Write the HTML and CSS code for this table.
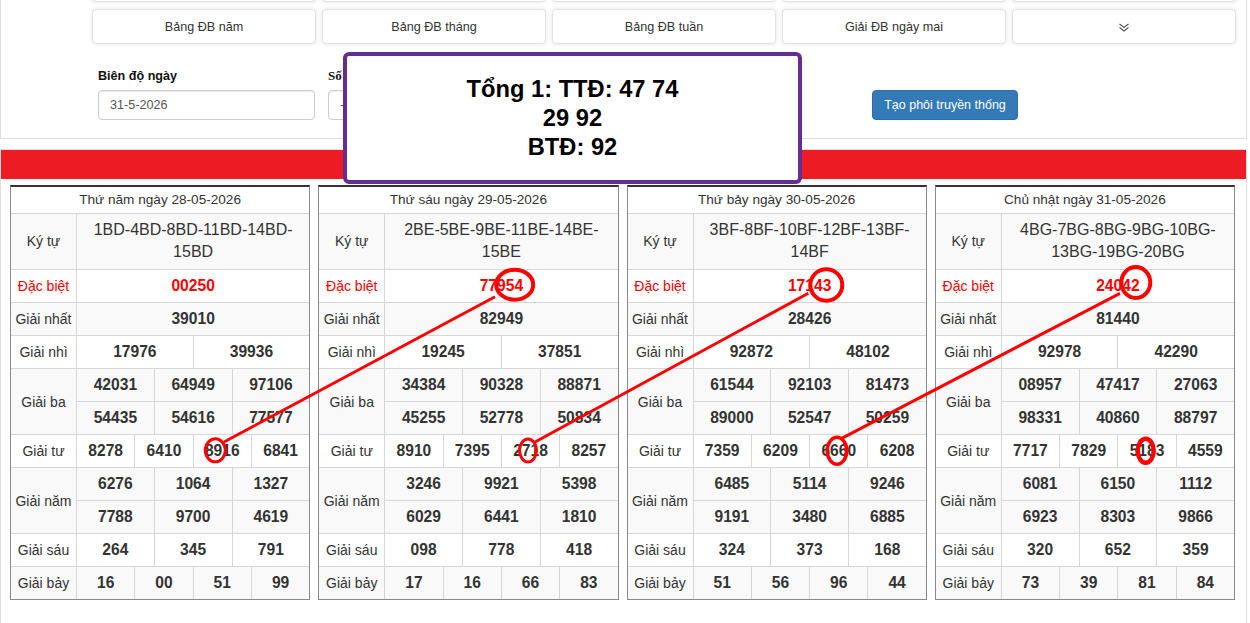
FILE: index.html
```html
<!DOCTYPE html>
<html lang="vi">
<head>
<meta charset="utf-8">
<title>Bảng đặc biệt</title>
<link rel="stylesheet" href="styles.css">
</head>
<body>
<div class="page">
  <div class="panel panel-top">
    <div class="nav-grid">
      <span class="nav-btn"></span><span class="nav-btn"></span><span class="nav-btn"></span><span class="nav-btn"></span><span class="nav-btn"></span>
    </div>
    <div class="nav-grid">
      <a class="nav-btn">Bảng ĐB năm</a>
      <a class="nav-btn">Bảng ĐB tháng</a>
      <a class="nav-btn">Bảng ĐB tuần</a>
      <a class="nav-btn">Giải ĐB ngày mai</a>
      <a class="nav-btn"><svg class="chev" width="12" height="9" viewBox="0 0 12 9"><path d="M1.5 1 L6 4.5 L10.5 1 M1.5 4.5 L6 8 L10.5 4.5" fill="none" stroke="#555" stroke-width="1.1"/></svg></a>
    </div>
    <div class="form-row">
      <div class="field">
        <div class="lbl-form">Biên độ ngày</div>
        <div class="input">31-5-2026</div>
      </div>
      <div class="field">
        <div class="lbl-form serif">Số ngày</div>
        <div class="input">-</div>
      </div>
      <div class="field">
        <div class="lbl-form">Kiểu</div>
        <div class="input">-</div>
      </div>
      <div class="field field-btn">
        <span class="btn-primary">Tạo phôi truyền thống</span>
      </div>
    </div>
  </div>

  <div class="panel panel-results">
    <div class="panel-heading"></div>
    <div class="results">

      <table class="kq">
        <colgroup><col class="c-lbl"><col span="12"></colgroup>
        <thead><tr><th colspan="13">Thứ năm ngày 28-05-2026</th></tr></thead>
        <tbody>
          <tr class="alt code-row"><td class="lbl">Ký tự</td><td colspan="12" class="code">1BD-4BD-8BD-11BD-14BD-15BD</td></tr>
          <tr class="db"><td class="lbl">Đặc biệt</td><td colspan="12" class="num">00250</td></tr>
          <tr class="alt"><td class="lbl">Giải nhất</td><td colspan="12" class="num">39010</td></tr>
          <tr><td class="lbl">Giải nhì</td><td colspan="6" class="num">17976</td><td colspan="6" class="num">39936</td></tr>
          <tr class="alt"><td class="lbl" rowspan="2">Giải ba</td><td colspan="4" class="num">42031</td><td colspan="4" class="num">64949</td><td colspan="4" class="num">97106</td></tr>
          <tr class="alt"><td colspan="4" class="num">54435</td><td colspan="4" class="num">54616</td><td colspan="4" class="num">77577</td></tr>
          <tr><td class="lbl">Giải tư</td><td colspan="3" class="num">8278</td><td colspan="3" class="num">6410</td><td colspan="3" class="num">8916</td><td colspan="3" class="num">6841</td></tr>
          <tr class="alt"><td class="lbl" rowspan="2">Giải năm</td><td colspan="4" class="num">6276</td><td colspan="4" class="num">1064</td><td colspan="4" class="num">1327</td></tr>
          <tr class="alt"><td colspan="4" class="num">7788</td><td colspan="4" class="num">9700</td><td colspan="4" class="num">4619</td></tr>
          <tr><td class="lbl">Giải sáu</td><td colspan="4" class="num">264</td><td colspan="4" class="num">345</td><td colspan="4" class="num">791</td></tr>
          <tr class="alt"><td class="lbl">Giải bảy</td><td colspan="3" class="num">16</td><td colspan="3" class="num">00</td><td colspan="3" class="num">51</td><td colspan="3" class="num">99</td></tr>
        </tbody>
      </table>

      <table class="kq">
        <colgroup><col class="c-lbl"><col span="12"></colgroup>
        <thead><tr><th colspan="13">Thứ sáu ngày 29-05-2026</th></tr></thead>
        <tbody>
          <tr class="alt code-row"><td class="lbl">Ký tự</td><td colspan="12" class="code">2BE-5BE-9BE-11BE-14BE-15BE</td></tr>
          <tr class="db"><td class="lbl">Đặc biệt</td><td colspan="12" class="num">77954</td></tr>
          <tr class="alt"><td class="lbl">Giải nhất</td><td colspan="12" class="num">82949</td></tr>
          <tr><td class="lbl">Giải nhì</td><td colspan="6" class="num">19245</td><td colspan="6" class="num">37851</td></tr>
          <tr class="alt"><td class="lbl" rowspan="2">Giải ba</td><td colspan="4" class="num">34384</td><td colspan="4" class="num">90328</td><td colspan="4" class="num">88871</td></tr>
          <tr class="alt"><td colspan="4" class="num">45255</td><td colspan="4" class="num">52778</td><td colspan="4" class="num">50834</td></tr>
          <tr><td class="lbl">Giải tư</td><td colspan="3" class="num">8910</td><td colspan="3" class="num">7395</td><td colspan="3" class="num">2718</td><td colspan="3" class="num">8257</td></tr>
          <tr class="alt"><td class="lbl" rowspan="2">Giải năm</td><td colspan="4" class="num">3246</td><td colspan="4" class="num">9921</td><td colspan="4" class="num">5398</td></tr>
          <tr class="alt"><td colspan="4" class="num">6029</td><td colspan="4" class="num">6441</td><td colspan="4" class="num">1810</td></tr>
          <tr><td class="lbl">Giải sáu</td><td colspan="4" class="num">098</td><td colspan="4" class="num">778</td><td colspan="4" class="num">418</td></tr>
          <tr class="alt"><td class="lbl">Giải bảy</td><td colspan="3" class="num">17</td><td colspan="3" class="num">16</td><td colspan="3" class="num">66</td><td colspan="3" class="num">83</td></tr>
        </tbody>
      </table>

      <table class="kq">
        <colgroup><col class="c-lbl"><col span="12"></colgroup>
        <thead><tr><th colspan="13">Thứ bảy ngày 30-05-2026</th></tr></thead>
        <tbody>
          <tr class="alt code-row"><td class="lbl">Ký tự</td><td colspan="12" class="code">3BF-8BF-10BF-12BF-13BF-14BF</td></tr>
          <tr class="db"><td class="lbl">Đặc biệt</td><td colspan="12" class="num">17143</td></tr>
          <tr class="alt"><td class="lbl">Giải nhất</td><td colspan="12" class="num">28426</td></tr>
          <tr><td class="lbl">Giải nhì</td><td colspan="6" class="num">92872</td><td colspan="6" class="num">48102</td></tr>
          <tr class="alt"><td class="lbl" rowspan="2">Giải ba</td><td colspan="4" class="num">61544</td><td colspan="4" class="num">92103</td><td colspan="4" class="num">81473</td></tr>
          <tr class="alt"><td colspan="4" class="num">89000</td><td colspan="4" class="num">52547</td><td colspan="4" class="num">50259</td></tr>
          <tr><td class="lbl">Giải tư</td><td colspan="3" class="num">7359</td><td colspan="3" class="num">6209</td><td colspan="3" class="num">6660</td><td colspan="3" class="num">6208</td></tr>
          <tr class="alt"><td class="lbl" rowspan="2">Giải năm</td><td colspan="4" class="num">6485</td><td colspan="4" class="num">5114</td><td colspan="4" class="num">9246</td></tr>
          <tr class="alt"><td colspan="4" class="num">9191</td><td colspan="4" class="num">3480</td><td colspan="4" class="num">6885</td></tr>
          <tr><td class="lbl">Giải sáu</td><td colspan="4" class="num">324</td><td colspan="4" class="num">373</td><td colspan="4" class="num">168</td></tr>
          <tr class="alt"><td class="lbl">Giải bảy</td><td colspan="3" class="num">51</td><td colspan="3" class="num">56</td><td colspan="3" class="num">96</td><td colspan="3" class="num">44</td></tr>
        </tbody>
      </table>

      <table class="kq">
        <colgroup><col class="c-lbl"><col span="12"></colgroup>
        <thead><tr><th colspan="13">Chủ nhật ngày 31-05-2026</th></tr></thead>
        <tbody>
          <tr class="alt code-row"><td class="lbl">Ký tự</td><td colspan="12" class="code">4BG-7BG-8BG-9BG-10BG-13BG-19BG-20BG</td></tr>
          <tr class="db"><td class="lbl">Đặc biệt</td><td colspan="12" class="num">24042</td></tr>
          <tr class="alt"><td class="lbl">Giải nhất</td><td colspan="12" class="num">81440</td></tr>
          <tr><td class="lbl">Giải nhì</td><td colspan="6" class="num">92978</td><td colspan="6" class="num">42290</td></tr>
          <tr class="alt"><td class="lbl" rowspan="2">Giải ba</td><td colspan="4" class="num">08957</td><td colspan="4" class="num">47417</td><td colspan="4" class="num">27063</td></tr>
          <tr class="alt"><td colspan="4" class="num">98331</td><td colspan="4" class="num">40860</td><td colspan="4" class="num">88797</td></tr>
          <tr><td class="lbl">Giải tư</td><td colspan="3" class="num">7717</td><td colspan="3" class="num">7829</td><td colspan="3" class="num">5183</td><td colspan="3" class="num">4559</td></tr>
          <tr class="alt"><td class="lbl" rowspan="2">Giải năm</td><td colspan="4" class="num">6081</td><td colspan="4" class="num">6150</td><td colspan="4" class="num">1112</td></tr>
          <tr class="alt"><td colspan="4" class="num">6923</td><td colspan="4" class="num">8303</td><td colspan="4" class="num">9866</td></tr>
          <tr><td class="lbl">Giải sáu</td><td colspan="4" class="num">320</td><td colspan="4" class="num">652</td><td colspan="4" class="num">359</td></tr>
          <tr class="alt"><td class="lbl">Giải bảy</td><td colspan="3" class="num">73</td><td colspan="3" class="num">39</td><td colspan="3" class="num">81</td><td colspan="3" class="num">84</td></tr>
        </tbody>
      </table>

    </div>
  </div>

  <svg class="marks" width="1250" height="623" viewBox="0 0 1250 623">
    <g fill="none" stroke="#ff0000">
      <ellipse cx="514.7" cy="284.7" rx="18.5" ry="15" stroke-width="4"/>
      <ellipse cx="826.3" cy="285" rx="16" ry="15.7" stroke-width="4"/>
      <ellipse cx="1135.8" cy="282.5" rx="14.5" ry="15.5" stroke-width="4"/>
      <ellipse cx="215.3" cy="450.3" rx="10" ry="11.5" stroke-width="3"/>
      <ellipse cx="528" cy="450.5" rx="8.5" ry="11.5" stroke-width="3"/>
      <ellipse cx="837" cy="450.7" rx="9.8" ry="13.5" stroke-width="3.5"/>
      <ellipse cx="1145.7" cy="450.8" rx="8" ry="12" stroke-width="4.5"/>
      <line x1="495" y1="296.7" x2="224" y2="442" stroke-width="3"/>
      <line x1="808.3" y1="293.3" x2="535" y2="442" stroke-width="3"/>
      <line x1="1120" y1="293.3" x2="841.7" y2="438.3" stroke-width="3"/>
    </g>
  </svg>

  <div class="popup">
    <div>Tổng 1: TTĐ: 47 74</div>
    <div>29 92</div>
    <div>BTĐ: 92</div>
  </div>
</div>
</body>
</html>
```

FILE: styles.css
```css
* { box-sizing: border-box; }
html, body { margin: 0; padding: 0; background: #fff; }
body {
  font-family: "Liberation Sans", Arial, sans-serif;
  color: #333;
  font-size: 14px;
}
.page {
  position: relative;
  width: 1250px;
  height: 623px;
  overflow: hidden;
}
.panel {
  width: 1247px;
  border: 1px solid #ddd;
  background: #fff;
}
.panel-top {
  margin-top: -42px;
  padding: 8px 0 18px 91px;
}
.nav-grid {
  display: grid;
  grid-template-columns: repeat(5, 224px);
  column-gap: 6px;
  margin-bottom: 7px;
}
.nav-btn {
  height: 35px;
  display: flex;
  align-items: center;
  justify-content: center;
  border: 1px solid #e3e3e3;
  border-radius: 4px;
  background: #fff;
  box-shadow: 0 0 4px rgba(0, 0, 0, 0.12);
  font-size: 12.6px;
  color: #333;
}
.chev { display: block; margin-top: 1px; }
.form-row {
  display: grid;
  grid-template-columns: 217px 217px 217px auto;
  column-gap: 13px;
  margin-left: 6px;
  margin-top: 23px;
}
.field { display: flex; flex-direction: column; }
.lbl-form {
  font-size: 12.6px;
  font-weight: bold;
  line-height: 18px;
  margin-bottom: 5px;
  color: #111;
}
.lbl-form.serif { font-family: "Liberation Serif", "Times New Roman", serif; font-size: 13px; }
.input {
  height: 30px;
  border: 1px solid #ccc;
  border-radius: 4px;
  box-shadow: inset 0 1px 1px rgba(0, 0, 0, 0.075);
  padding: 0 11px;
  line-height: 28px;
  font-size: 12.6px;
  color: #555;
}
.field-btn { justify-content: flex-end; }
.btn-primary {
  display: inline-block;
  align-self: flex-start;
  margin-left: 84px;
  width: 146px;
  height: 30px;
  line-height: 28px;
  text-align: center;
  background: #337ab7;
  border: 1px solid #2e6da4;
  border-radius: 4px;
  color: #fff;
  font-size: 12.5px;
}
.panel-results {
  margin-top: 10px;
  height: 600px;
}
.panel-heading {
  height: 29px;
  background: #ed1c24;
}
.results {
  display: grid;
  grid-template-columns: repeat(4, 1fr);
  column-gap: 8px;
  padding: 6px 11px 0 9px;
}
.kq {
  width: 100%;
  table-layout: fixed;
  border-collapse: separate;
  border-spacing: 0;
  border: 1px solid #8a8a8a;
  border-top: 2px solid #333;
}
.kq col.c-lbl { width: 65px; }
.kq th {
  font-weight: normal;
  font-size: 13.6px;
  line-height: 20px;
  padding: 3px 2px;
  color: #333;
  background: #fff;
}
.kq td {
  border-left: 1px solid #d6d6d6;
  border-top: 1px solid #d6d6d6;
  text-align: center;
  vertical-align: middle;
  padding: 4px 1px;
  line-height: 24px;
  background: #fff;
}
.kq td.lbl {
  border-left: none;
  font-size: 14px;
  color: #333;
  white-space: nowrap;
}
.kq tr.alt td { background: #f9f9f9; }
.kq tr.code-row td { line-height: 22px; padding: 5px 4px 6px; }
.kq td.code { font-size: 16px; color: #333; }
.kq td.num {
  font-size: 15.6px;
  font-weight: bold;
  color: #333;
}
.kq tr.db td { color: #ff0000; }
.marks {
  position: absolute;
  left: 0;
  top: 0;
  pointer-events: none;
}
.popup {
  position: absolute;
  left: 343px;
  top: 52px;
  width: 459px;
  height: 132px;
  border: 4px solid #652d91;
  border-radius: 6px;
  background: #fff;
  display: flex;
  flex-direction: column;
  align-items: center;
  justify-content: center;
  font-size: 23.7px;
  font-weight: bold;
  line-height: 29px;
  color: #000;
}
```
